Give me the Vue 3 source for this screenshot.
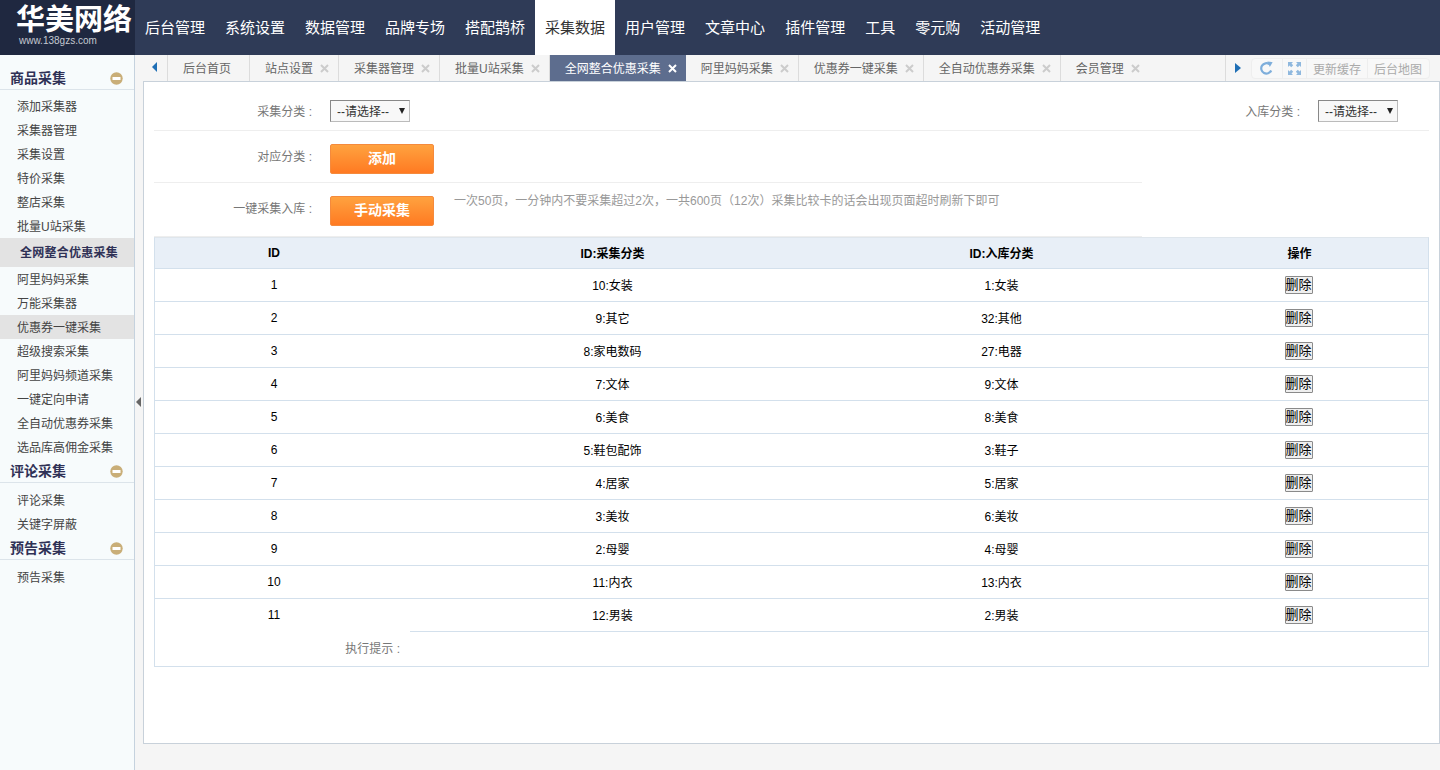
<template>
  <div class="page">
    <header class="topbar">
      <div class="logo">
        <div class="logo-name">华美网络</div>
        <div class="logo-url">www.138gzs.com</div>
      </div>
      <nav class="topnav">
        <a
          v-for="item in navItems"
          :key="item"
          class="topnav-item"
          :class="{ active: item === '采集数据' }"
        >{{ item }}</a>
      </nav>
    </header>

    <div class="body">
      <aside class="sidebar">
        <section v-for="group in menuGroups" :key="group.title" class="menu-group">
          <div class="menu-title">
            <span>{{ group.title }}</span>
            <svg class="minus" width="13" height="13" viewBox="0 0 13 13">
              <circle cx="6.5" cy="6.5" r="6.2" fill="#c9ae78" />
              <rect x="2.5" y="5" width="8" height="3" fill="#fff" />
            </svg>
          </div>
          <ul class="menu-list">
            <li
              v-for="link in group.links"
              :key="link"
              class="menu-item"
              :class="{ current: link === '全网整合优惠采集', hovered: link === '优惠券一键采集' }"
            >{{ link }}</li>
          </ul>
        </section>
      </aside>

      <div class="gutter">
        <span class="gutter-arrow"></span>
      </div>

      <main class="main">
        <div class="tabbar">
          <div class="tab-prev"><span class="arrow-left"></span></div>
          <div
            v-for="tab in tabs"
            :key="tab.name"
            class="tab"
            :class="{ active: tab.name === '全网整合优惠采集', fixed: !tab.close }"
          >
            <span>{{ tab.name }}</span>
            <svg v-if="tab.close" class="tab-close" width="9" height="9" viewBox="0 0 9 9">
              <path d="M1 1 L8 8 M8 1 L1 8" stroke="currentColor" stroke-width="2" />
            </svg>
          </div>
          <div class="tab-tools">
            <div class="tab-next"><span class="arrow-right"></span></div>
            <div class="tools">
              <span class="tool tool-refresh">
                <svg width="15" height="15" viewBox="0 0 15 15">
                  <path d="M12.2 9.5 A5.2 5.2 0 1 1 10.5 3.2" fill="none" stroke="#7eaedb" stroke-width="2.2" />
                  <path d="M8.4 0.4 L13.6 1.2 L10.8 6 Z" fill="#7eaedb" />
                </svg>
              </span>
              <span class="tool tool-full">
                <svg width="13" height="13" viewBox="0 0 13 13" fill="#8fb8de">
                  <path d="M0 0 H5 L3.5 1.5 L5.2 3.2 L3.2 5.2 L1.5 3.5 L0 5 Z" />
                  <path d="M13 0 V5 L11.5 3.5 L9.8 5.2 L7.8 3.2 L9.5 1.5 L8 0 Z" />
                  <path d="M0 13 V8 L1.5 9.5 L3.2 7.8 L5.2 9.8 L3.5 11.5 L5 13 Z" />
                  <path d="M13 13 H8 L9.5 11.5 L7.8 9.8 L9.8 7.8 L11.5 9.5 L13 8 Z" />
                </svg>
              </span>
              <span class="tool">更新缓存</span>
              <span class="tool tool-last">后台地图</span>
            </div>
          </div>
        </div>

        <div class="content">
          <div class="form-row row-select">
            <label class="form-label">采集分类 :</label>
            <div class="select-wrap">
              <select class="form-select">
                <option>--请选择--</option>
              </select>
            </div>
            <label class="form-label form-label-right">入库分类 :</label>
            <div class="select-wrap">
              <select class="form-select">
                <option>--请选择--</option>
              </select>
            </div>
          </div>

          <div class="form-row row-add">
            <label class="form-label">对应分类 :</label>
            <button class="orange-btn">添加</button>
          </div>

          <div class="form-row row-collect">
            <label class="form-label">一键采集入库 :</label>
            <button class="orange-btn">手动采集</button>
            <span class="form-note">一次50页，一分钟内不要采集超过2次，一共600页（12次）采集比较卡的话会出现页面超时刷新下即可</span>
          </div>

          <div class="table-box">
            <table class="data-table">
              <colgroup>
                <col style="width: 238px" />
                <col style="width: 439px" />
                <col style="width: 339px" />
                <col />
              </colgroup>
              <thead>
                <tr>
                  <th>ID</th>
                  <th>ID:采集分类</th>
                  <th>ID:入库分类</th>
                  <th>操作</th>
                </tr>
              </thead>
              <tbody>
                <tr v-for="row in rows" :key="row.id">
                  <td>{{ row.id }}</td>
                  <td>{{ row.source }}</td>
                  <td>{{ row.target }}</td>
                  <td><button class="del-btn">删除</button></td>
                </tr>
              </tbody>
            </table>
            <div class="tip-row">
              <span class="tip-label">执行提示 :</span>
              <div class="tip-body"></div>
            </div>
          </div>
        </div>
      </main>
    </div>
  </div>
</template>

<script setup>
const navItems = [
  '后台管理', '系统设置', '数据管理', '品牌专场', '搭配鹊桥', '采集数据',
  '用户管理', '文章中心', '插件管理', '工具', '零元购', '活动管理'
]

const menuGroups = [
  {
    title: '商品采集',
    links: [
      '添加采集器', '采集器管理', '采集设置', '特价采集', '整店采集', '批量U站采集',
      '全网整合优惠采集', '阿里妈妈采集', '万能采集器', '优惠券一键采集', '超级搜索采集',
      '阿里妈妈频道采集', '一键定向申请', '全自动优惠券采集', '选品库高佣金采集'
    ]
  },
  { title: '评论采集', links: ['评论采集', '关键字屏蔽'] },
  { title: '预告采集', links: ['预告采集'] }
]

const tabs = [
  { name: '后台首页', close: false },
  { name: '站点设置', close: true },
  { name: '采集器管理', close: true },
  { name: '批量U站采集', close: true },
  { name: '全网整合优惠采集', close: true },
  { name: '阿里妈妈采集', close: true },
  { name: '优惠券一键采集', close: true },
  { name: '全自动优惠券采集', close: true },
  { name: '会员管理', close: true }
]

const rows = [
  { id: 1, source: '10:女装', target: '1:女装' },
  { id: 2, source: '9:其它', target: '32:其他' },
  { id: 3, source: '8:家电数码', target: '27:电器' },
  { id: 4, source: '7:文体', target: '9:文体' },
  { id: 5, source: '6:美食', target: '8:美食' },
  { id: 6, source: '5:鞋包配饰', target: '3:鞋子' },
  { id: 7, source: '4:居家', target: '5:居家' },
  { id: 8, source: '3:美妆', target: '6:美妆' },
  { id: 9, source: '2:母婴', target: '4:母婴' },
  { id: 10, source: '11:内衣', target: '13:内衣' },
  { id: 11, source: '12:男装', target: '2:男装' }
]
</script>

<style>
html,
body {
  margin: 0;
  height: 100%;
  overflow: hidden;
  background: #f5f5f5;
}
</style>

<style scoped>
.page {
  height: 770px;
  display: flex;
  flex-direction: column;
  font-family: "Liberation Sans", "Noto Sans CJK SC", sans-serif;
  font-size: 12px;
  color: #333;
}

.topbar {
  height: 55px;
  flex-shrink: 0;
  display: flex;
  background: #2f3b57;
}

.logo {
  width: 135px;
  flex-shrink: 0;
  background: #1f2840;
  padding: 4px 0 0 16px;
  box-sizing: border-box;
}

.logo-name {
  font-size: 29px;
  line-height: 32px;
  font-weight: 700;
  color: #fff;
  white-space: nowrap;
}

.logo-url {
  margin: -1px 0 0 3px;
  font-size: 10px;
  line-height: 12px;
  color: #c4c8d0;
}

.topnav {
  display: flex;
}

.topnav-item {
  padding: 0 10px;
  line-height: 55px;
  font-size: 15px;
  color: #fff;
  white-space: nowrap;
}

.topnav-item.active {
  background: #fff;
  color: #333;
}

.body {
  flex: 1;
  min-height: 0;
  display: flex;
}

.sidebar {
  width: 135px;
  flex-shrink: 0;
  box-sizing: border-box;
  padding-top: 11px;
  background: #f7fbfc;
  border-right: 1px solid #c5d2de;
}

.menu-title {
  height: 24px;
  box-sizing: border-box;
  padding: 0 11px 2px 10px;
  display: flex;
  align-items: center;
  justify-content: space-between;
  border-bottom: 1px solid #dce4ea;
  font-size: 14px;
  font-weight: 700;
  color: #2f3156;
}

.minus {
  margin-top: 4px;
}

.menu-list {
  list-style: none;
  margin: 0;
  padding: 4px 0 0;
}

.menu-group + .menu-group .menu-list {
  padding-top: 5px;
}

.menu-item {
  height: 24px;
  line-height: 26px;
  padding-left: 17px;
  color: #444;
  white-space: nowrap;
}

.menu-item.current {
  height: 29px;
  line-height: 31px;
  padding-left: 20px;
  letter-spacing: 0.25px;
  background: #e3e3e3;
  font-weight: 700;
  color: #2f3156;
}

.menu-item.hovered {
  background: #e3e3e3;
}

.gutter {
  width: 8px;
  flex-shrink: 0;
  position: relative;
  background: #f5f5f5;
}

.gutter-arrow {
  position: absolute;
  top: 342px;
  left: 1px;
  border-style: solid;
  border-width: 5px 5px 5px 0;
  border-color: transparent #666 transparent transparent;
}

.main {
  flex: 1;
  min-width: 0;
  display: flex;
  flex-direction: column;
  background: #f5f5f5;
}

.tabbar {
  height: 26px;
  flex-shrink: 0;
  display: flex;
  color: #666;
}

.tab-prev {
  width: 22px;
  display: flex;
  align-items: center;
  justify-content: center;
  padding: 0 2px 2px 0;
  border-right: 1px solid #dcdcdc;
}

.arrow-left {
  border-style: solid;
  border-width: 5px 5px 5px 0;
  border-color: transparent #1f6fb5 transparent transparent;
}

.arrow-right {
  border-style: solid;
  border-width: 5px 0 5px 6px;
  border-color: transparent transparent transparent #1f6fb5;
}

.tab {
  display: flex;
  align-items: center;
  gap: 7px;
  padding: 0 9px 2px 15px;
  border-right: 1px solid #dcdcdc;
  white-space: nowrap;
}

.tab.fixed {
  padding-right: 18px;
}

.tab:nth-last-child(2) {
  border-right: none;
}

.tab-close {
  color: #ccc;
  margin-top: 2px;
}

.tab.active {
  background: #5d6d8e;
  color: #fff;
  border-right: none;
}

.tab.active .tab-close {
  color: #fff;
}

.tab-tools {
  margin-left: auto;
  display: flex;
  align-items: center;
  border-left: 1px solid #dcdcdc;
  padding-right: 10px;
}

.tab-next {
  width: 25px;
  display: flex;
  align-items: center;
  justify-content: center;
}

.tools {
  height: 19px;
  display: flex;
  align-items: stretch;
  border: 1px solid #eee;
  border-radius: 4px;
  background: #f8f8f8;
  color: #aaa;
}

.tool {
  display: flex;
  align-items: center;
  padding: 0 6px;
  border-left: 1px solid #eee;
  white-space: nowrap;
}

.tool:first-child {
  border-left: none;
}

.tool-refresh,
.tool-full {
  box-sizing: border-box;
  justify-content: center;
  padding: 0;
}

.tool-refresh {
  width: 30px;
}

.tool-full {
  width: 24px;
}

.tool-last {
  padding-right: 7px;
}

.content {
  flex: 1;
  min-height: 0;
  box-sizing: border-box;
  margin-bottom: 26px;
  padding: 0 10px;
  background: #fff;
  border: 1px solid #c8d1da;
}

.form-row {
  display: flex;
}

.row-select {
  height: 49px;
  padding-top: 18px;
  box-sizing: border-box;
  border-bottom: 1px solid #eee;
}

.row-add {
  height: 52px;
  padding-top: 13px;
  box-sizing: border-box;
  border-bottom: 1px solid #eee;
  width: 988px;
}

.row-collect {
  height: 54px;
  padding-top: 13px;
  box-sizing: border-box;
  border-bottom: 1px solid #eee;
  width: 988px;
}

.form-label {
  width: 158px;
  flex-shrink: 0;
  margin-right: 18px;
  text-align: right;
  color: #777;
  line-height: 24px;
}

.form-label-right {
  width: auto;
  margin-left: auto;
}

.select-wrap {
  position: relative;
  width: 80px;
  height: 22px;
  flex-shrink: 0;
  margin-right: 31px;
}

.select-wrap::after {
  content: "";
  position: absolute;
  top: 8px;
  right: 5px;
  border-style: solid;
  border-width: 6px 3.5px 0;
  border-color: #222 transparent transparent;
  pointer-events: none;
}

.form-select {
  width: 100%;
  height: 100%;
  display: block;
  appearance: none;
  padding: 2px 0 0 6px;
  font-family: inherit;
  font-size: 12px;
  color: #333;
  background: #f8f8f8;
  border: 1px solid #888;
  border-right-color: #bbb;
  border-bottom-color: #bbb;
  border-radius: 0;
}

.row-add .form-label,
.row-collect .form-label {
  line-height: 26px;
}

.orange-btn {
  width: 104px;
  height: 30px;
  flex-shrink: 0;
  padding: 0 0 4px;
  font-family: inherit;
  font-size: 14px;
  font-weight: 700;
  color: #fff;
  background: linear-gradient(#ffa23f, #ff7a22);
  border: 1px solid #f58a3c;
  border-radius: 2px;
}

.form-note {
  margin: -6px 0 0 20px;
  line-height: 22px;
  color: #999;
  white-space: nowrap;
}

.table-box {
  border: 1px solid #d3e0ec;
  border-top-color: #dfe6ec;
  width: 1275px;
  box-sizing: border-box;
}

.data-table {
  width: 100%;
  border-collapse: collapse;
  table-layout: fixed;
  color: #000;
}

.data-table th {
  height: 30px;
  padding: 0;
  background: #e8eff7;
  border-bottom: 1px solid #d3e0ec;
  font-weight: 700;
}

.data-table th:nth-child(n + 2) {
  height: 28px;
  padding-bottom: 2px;
}

.data-table td {
  height: 32px;
  padding: 0;
  text-align: center;
  border-bottom: 1px solid #d3e0ec;
}

.data-table td:nth-child(2),
.data-table td:nth-child(3) {
  height: 30px;
  padding-bottom: 2px;
}

.data-table tbody tr:last-child td {
  border-bottom: none;
}

.del-btn {
  width: 28px;
  height: 18px;
  margin-right: 2px;
  padding: 0;
  font-family: inherit;
  font-size: 13px;
  line-height: 16px;
  color: #000;
  background: #efefef;
  border: 1px solid #8a8a8a;
  border-radius: 1px;
  vertical-align: middle;
}

.tip-row {
  height: 35px;
  display: flex;
}

.tip-label {
  width: 245px;
  flex-shrink: 0;
  text-align: right;
  line-height: 37px;
  color: #777;
}

.tip-body {
  flex: 1;
  margin-left: 10px;
  border-top: 1px solid #d3e0ec;
}
</style>
